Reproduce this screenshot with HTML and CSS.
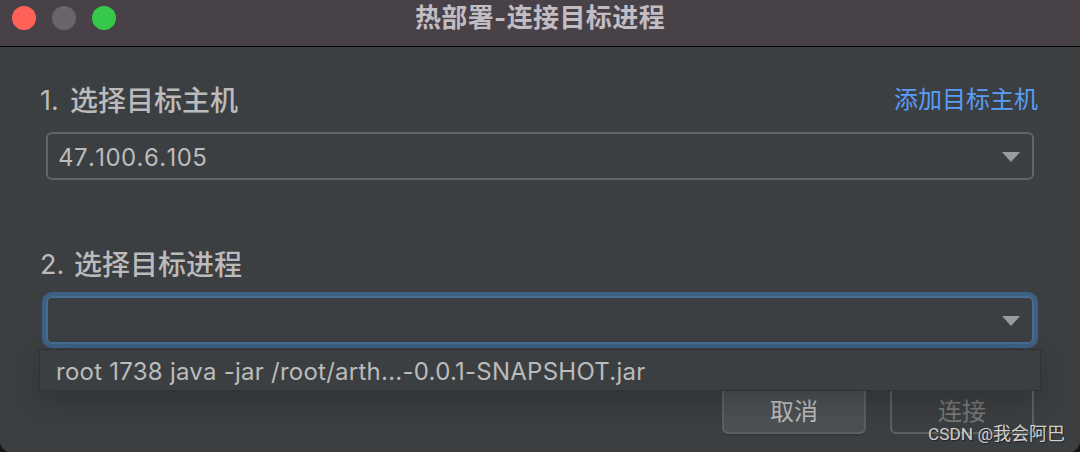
FILE: index.html
```
<!DOCTYPE html>
<html lang="zh-CN">
<head>
  <meta charset="UTF-8">
  <meta name="viewport" content="width=device-width, initial-scale=1.0">
  <title>热部署-连接目标进程</title>
  <link rel="stylesheet" href="styles.css">
</head>
<body>
  <div class="window">
    <div class="titlebar">
      <div class="lights">
        <span class="light close"></span>
        <span class="light minimize"></span>
        <span class="light zoom"></span>
      </div>
      <div class="title">热部署-连接目标进程</div>
    </div>

    <div class="content">
      <div class="row host-row">
        <div class="label"><span class="num">1.</span>选择目标主机</div>
        <a class="link">添加目标主机</a>
      </div>
      <div class="select">
        <span class="value">47.100.6.105</span>
        <svg class="arrow" width="18" height="10" viewBox="0 0 18 10"><path d="M0 0h18L9 10z"/></svg>
      </div>

      <div class="row process-row">
        <div class="label"><span class="num second">2.</span>选择目标进程</div>
      </div>
      <div class="select focused">
        <svg class="arrow" width="18" height="10" viewBox="0 0 18 10"><path d="M0 0h18L9 10z"/></svg>
        <div class="popup"><span class="option">root 1738 java -jar /root/arth...-0.0.1-SNAPSHOT.jar</span></div>
      </div>

      <div class="buttons">
        <div class="button">取消</div>
        <div class="button disabled">连接</div>
      </div>
    </div>
  </div>
  <div class="watermark"><span class="latin">CSDN @</span>我会阿巴</div>
</body>
</html>
```
FILE: styles.css
```
* {
  box-sizing: border-box;
}
body {
  margin: 0;
  height: 452px;
  overflow: hidden;
  background: #171717;
  color: #bbb;
  font-family: Inter, "Noto Sans CJK SC", sans-serif;
}
.window {
  height: 452px;
  overflow: hidden;
  background: #3c3f41;
  border-radius: 0 0 11px 11px;
}
.titlebar {
  display: grid;
  grid-template-columns: 200px 1fr 200px;
  height: 47px;
  padding-top: 6px;
  background: #484248;
  border-bottom: 1px solid #000;
}
.lights {
  display: flex;
  gap: 16px;
  padding-left: 12px;
}
.light {
  width: 24px;
  height: 24px;
  border-radius: 50%;
}
.close {
  background: #ff6159;
}
.minimize {
  background: #69646a;
}
.zoom {
  background: #35c84a;
}
.title {
  color: #c2bcc3;
  font-size: 26px;
  font-weight: bold;
  letter-spacing: .4px;
  line-height: 23px;
  text-align: center;
  white-space: nowrap;
}
.content {
  padding: 33px 46px 0;
}
.row {
  display: flex;
  align-items: center;
  justify-content: space-between;
  height: 40px;
  margin: 0 -4px 0 -6px;
}
.host-row {
  margin-bottom: 12px;
}
.process-row {
  margin-top: 64px;
  margin-bottom: 12px;
}
.label {
  display: flex;
  align-items: center;
  padding-top: 2px;
  font-size: 28px;
  font-weight: 500;
  line-height: 40px;
}
.num {
  width: 30px;
  font-size: 27px;
  font-weight: 400;
}
.second {
  width: 34px;
}
.link {
  color: #589df6;
  font-size: 24px;
  line-height: 40px;
}
.select {
  position: relative;
  display: flex;
  align-items: center;
  height: 48px;
  padding: 1px 12px 0 10px;
  border: 2px solid #646464;
  border-radius: 6px;
}
.value {
  font-size: 24px;
  font-kerning: none;
  letter-spacing: .42px;
  line-height: 44px;
  padding-top: 2px;
}
.arrow {
  margin-left: auto;
  margin-top: 1px;
  fill: #9a9da0;
}
.focused {
  border-color: #466d94;
  box-shadow: 0 0 0 4px #3d6185;
}
.popup {
  position: absolute;
  top: 52px;
  left: -8px;
  width: 1000px;
  height: 40px;
  padding-left: 16px;
  background: #3c3f41;
  box-shadow: 0 0 0 1px #303234, 0 10px 30px rgba(0, 0, 0, .22);
  font-size: 24px;
  letter-spacing: .25px;
  line-height: 43px;
  white-space: nowrap;
}
.buttons {
  display: flex;
  justify-content: flex-end;
  gap: 24px;
  margin-top: 42px;
}
.button {
  width: 144px;
  height: 48px;
  border: 2px solid #5e6060;
  border-radius: 6px;
  background: #4c5052;
  box-shadow: 0 2px 1px #35383a;
  font-size: 24px;
  line-height: 48px;
  text-align: center;
}
.disabled {
  background: transparent;
  box-shadow: none;
  color: #777;
}
/* sits over the bottom right corner of the window */
.watermark {
  position: absolute;
  right: 15px;
  bottom: 6px;
  color: #d0d0d0;
  font-size: 18px;
  line-height: 24px;
  text-shadow: 1px 1px 1px #222;
}
.latin {
  font-family: Roboto, sans-serif;
  font-size: 17.3px;
}
```
